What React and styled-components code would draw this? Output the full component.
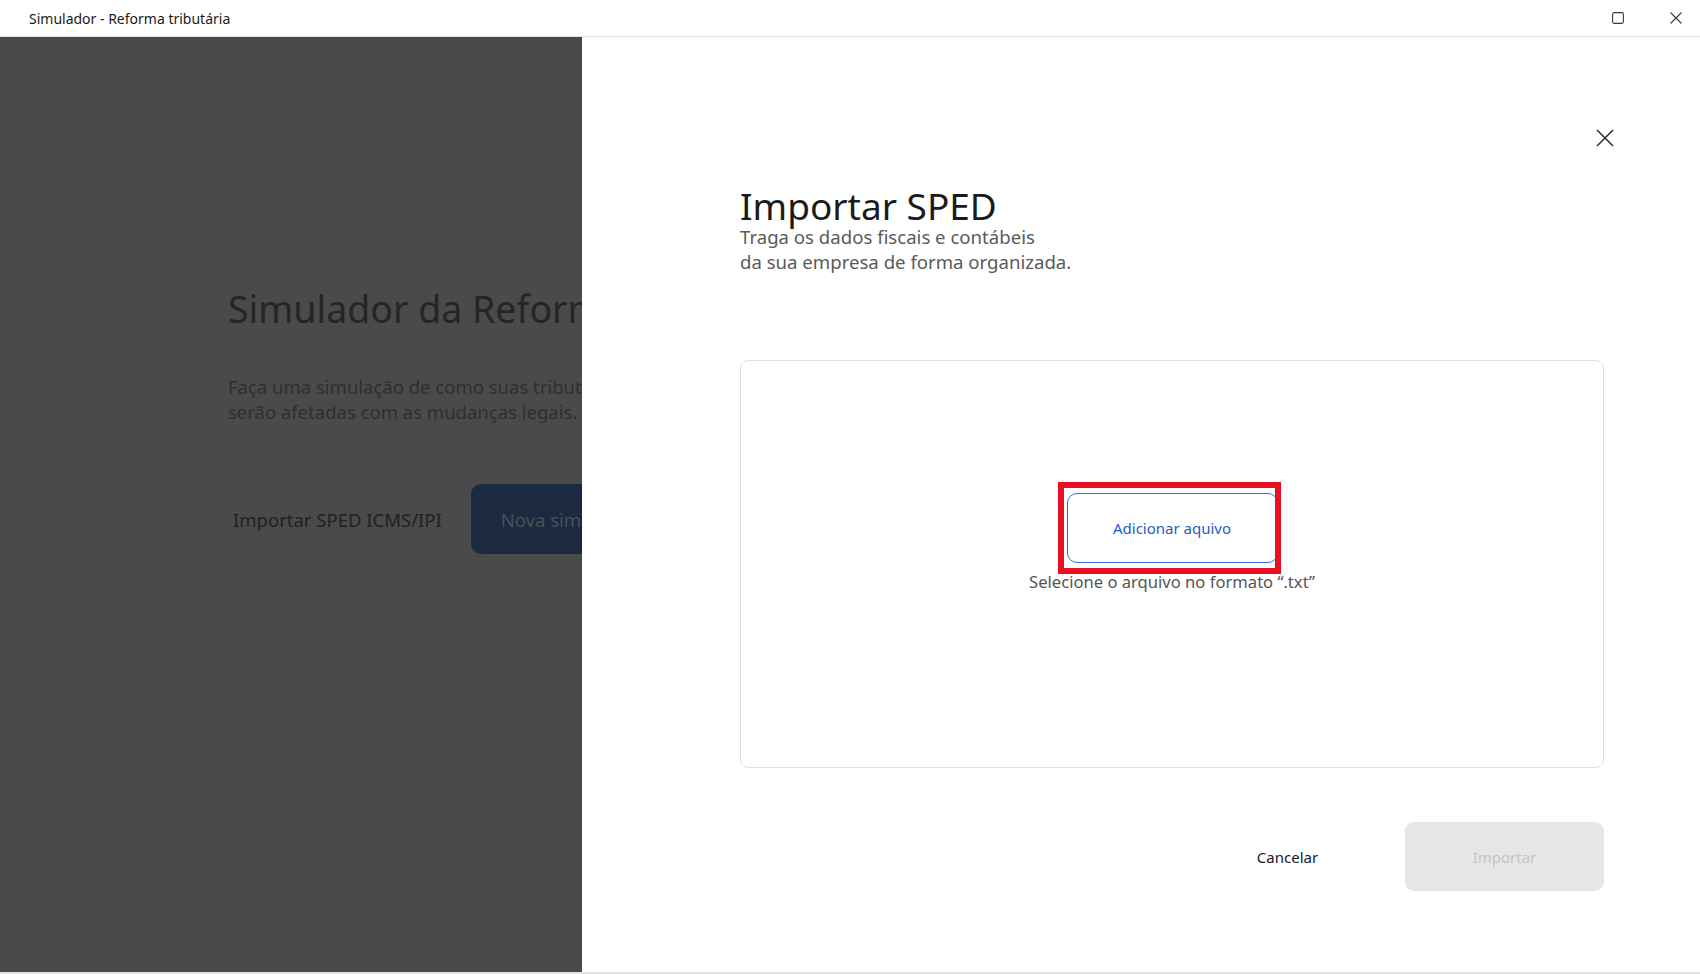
import styled, { createGlobalStyle } from 'styled-components'

const GlobalStyle = createGlobalStyle`
  html, body {
    margin: 0;
    padding: 0;
    background: #fff;
    overflow: hidden;
  }
  body {
    font-family: "Noto Sans", "Open Sans", sans-serif;
    color: #1a1a1a;
  }
  * { box-sizing: border-box; }
  button { font-family: inherit; }
`;

const Window = styled.div`
  width: 1700px;
  height: 974px;
  display: flex;
  flex-direction: column;
  background: #fff;
`;

const TitleBar = styled.header`
  height: 37px;
  flex-shrink: 0;
  display: flex;
  align-items: center;
  justify-content: space-between;
  padding-left: 29px;
  border-bottom: 1px solid #e3e3e3;
  font-size: 14px;
  color: #1a1a1a;
`;

const WindowControls = styled.div`
  display: flex;
  height: 100%;
  gap: 10px;
`;

const ControlButton = styled.button`
  width: 48px;
  height: 100%;
  border: 0;
  background: transparent;
  display: flex;
  align-items: center;
  justify-content: center;
  color: #3a3a3a;
  padding: 0;
`;

const Body = styled.div`
  position: relative;
  flex: 1;
  overflow: hidden;
  border-bottom: 2px solid #e3e3e3;
`;

/* page behind the drawer, shown dimmed */
const Home = styled.main`
  height: 100%;
  background: #4a4a4a;
  padding: 248px 0 0 228px;
  display: flex;
  flex-direction: column;
`;

const HomeTitle = styled.h1`
  margin: 0;
  font-size: 37.5px;
  font-weight: 400;
  line-height: 48px;
  color: #252525;
  white-space: nowrap;
`;

const HomeText = styled.p`
  margin: 41px 0 0;
  font-size: 18.5px;
  line-height: 25px;
  color: #2f2f2f;
  white-space: nowrap;
`;

const HomeActions = styled.div`
  margin-top: 60px;
  display: flex;
  align-items: center;
  gap: 24px;
`;

const GhostButton = styled.button`
  border: 0;
  background: transparent;
  padding: 0 5px;
  font-size: 18.5px;
  color: #212121;
`;

const PrimaryButton = styled.button`
  height: 70px;
  padding: 0 30px;
  border: 0;
  border-radius: 10px;
  background: #1b2a41;
  color: #4b4e53;
  font-size: 18.5px;
  white-space: nowrap;
`;

const Drawer = styled.aside`
  position: absolute;
  top: 0;
  right: 0;
  bottom: 0;
  width: 1118px;
  background: #fff;
  padding: 151px 96px 0 158px;
  display: flex;
  flex-direction: column;
`;

const CloseButton = styled.button`
  position: absolute;
  top: 81px;
  right: 75px;
  width: 40px;
  height: 40px;
  border: 0;
  background: transparent;
  padding: 0;
  display: flex;
  align-items: center;
  justify-content: center;
  color: #2a2a2a;
`;

const DrawerTitle = styled.h2`
  margin: 0;
  font-size: 37px;
  font-weight: 400;
  line-height: 36px;
  color: #1b1b1b;
`;

const DrawerText = styled.p`
  margin: 0;
  font-size: 18.6px;
  line-height: 25px;
  color: #5a5a5a;
`;

const DropZone = styled.section`
  margin-top: 86px;
  height: 408px;
  border: 1.5px solid #e2e2e2;
  border-radius: 8px;
  display: flex;
  flex-direction: column;
  align-items: center;
  padding-top: 132px;
`;

const Highlight = styled.div`
  position: relative;
  &::after {
    content: '';
    position: absolute;
    top: -11px;
    right: -3px;
    bottom: -11px;
    left: -9px;
    border: 6px solid #e81224;
    pointer-events: none;
  }
`;

const OutlineButton = styled.button`
  width: 211px;
  height: 70px;
  border: 1.5px solid #3570d2;
  border-radius: 10px;
  background: #fff;
  color: #1d5cc6;
  font-size: 15px;
`;

const Hint = styled.span`
  margin-top: 7px;
  font-size: 16.6px;
  color: #555;
`;

const Footer = styled.div`
  margin-top: 54px;
  display: flex;
  justify-content: flex-end;
  gap: 18px;
`;

const FooterButton = styled.button`
  width: 199px;
  height: 69px;
  border: 0;
  border-radius: 9px;
  font-size: 15px;
  background: ${p => (p.$disabled ? '#e6e6e6' : 'transparent')};
  color: ${p => (p.$disabled ? '#c4c4c4' : '#1a1a1a')};
`;

export default function App() {
  return (
    <Window>
      <GlobalStyle />
      <TitleBar>
        <span>Simulador - Reforma tributária</span>
        <WindowControls>
          <ControlButton aria-label="Maximizar">
            <svg width="12" height="12" viewBox="0 0 12 12" fill="none" stroke="currentColor" strokeWidth="1.1">
              <rect x="0.6" y="0.6" width="10.8" height="10.8" rx="1.6" />
            </svg>
          </ControlButton>
          <ControlButton aria-label="Fechar">
            <svg width="12" height="12" viewBox="0 0 12 12" fill="none" stroke="currentColor" strokeWidth="1.1">
              <path d="M0.5 0.5 L11.5 11.5 M11.5 0.5 L0.5 11.5" />
            </svg>
          </ControlButton>
        </WindowControls>
      </TitleBar>

      <Body>
        <Home>
          <HomeTitle>Simulador da Reforma tributária</HomeTitle>
          <HomeText>
            Faça uma simulação de como suas tributações<br />
            serão afetadas com as mudanças legais.
          </HomeText>
          <HomeActions>
            <GhostButton>Importar SPED ICMS/IPI</GhostButton>
            <PrimaryButton>Nova simulação</PrimaryButton>
          </HomeActions>
        </Home>

        <Drawer>
          <CloseButton aria-label="Fechar">
            <svg width="18" height="18" viewBox="0 0 18 18" fill="none" stroke="currentColor" strokeWidth="1.5">
              <path d="M1 1 L17 17 M17 1 L1 17" />
            </svg>
          </CloseButton>
          <DrawerTitle>Importar SPED</DrawerTitle>
          <DrawerText>
            Traga os dados fiscais e contábeis<br />
            da sua empresa de forma organizada.
          </DrawerText>

          <DropZone>
            <Highlight>
              <OutlineButton>Adicionar aquivo</OutlineButton>
            </Highlight>
            <Hint>Selecione o arquivo no formato “.txt”</Hint>
          </DropZone>

          <Footer>
            <FooterButton>Cancelar</FooterButton>
            <FooterButton $disabled>Importar</FooterButton>
          </Footer>
        </Drawer>
      </Body>
    </Window>
  )
}
